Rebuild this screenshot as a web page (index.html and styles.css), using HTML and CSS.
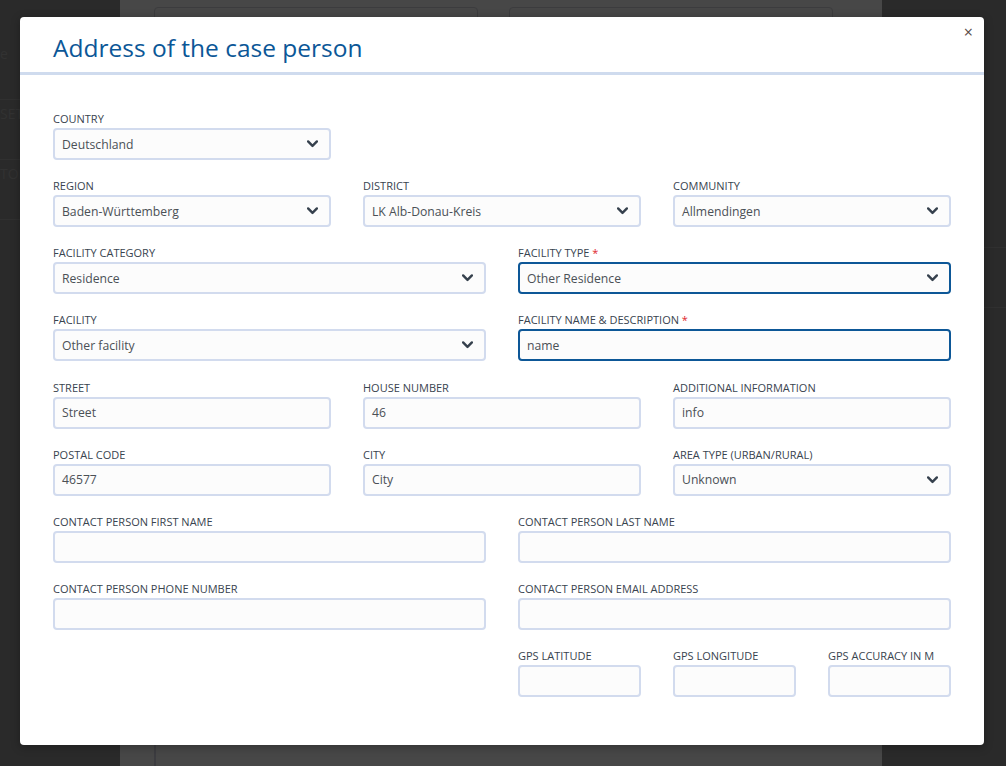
FILE: index.html
```html
<!DOCTYPE html>
<html lang="en">
  <head>
    <meta charset="UTF-8">
    <title>Address of the case person</title>
    <link rel="stylesheet" href="styles.css">
  </head>
  <body>

    <!-- dimmed application behind the window -->
    <div class="backdrop">
      <div class="app-side left">
        <div class="ghost-line">e</div>
        <div class="ghost-line">SET</div>
        <div class="ghost-line">TOK</div>
      </div>
      <div class="app-main">
        <div class="ghost-row">
          <div class="ghost-box"></div>
          <div class="ghost-box"></div>
        </div>
        <div class="ghost-foot"></div>
      </div>
      <div class="app-side right">
        <div class="ghost-line">TYPE</div>
        <div class="ghost-line">Fac</div>
      </div>
    </div>

    <div class="modal" role="dialog">
      <div class="modal-header">
        <h1>Address of the case person</h1>
        <span class="close">&times;</span>
      </div>

      <div class="modal-body">
        <div class="form">

          <div class="field c2">
            <label>Country</label>
            <div class="control">Deutschland <svg class="chev" viewBox="0 0 10 7"><polyline points="1,1.2 5,5.2 9,1.2"/></svg></div>
          </div>

          <div class="field c2 first">
            <label>Region</label>
            <div class="control">Baden-Württemberg <svg class="chev" viewBox="0 0 10 7"><polyline points="1,1.2 5,5.2 9,1.2"/></svg></div>
          </div>
          <div class="field c2">
            <label>District</label>
            <div class="control">LK Alb-Donau-Kreis <svg class="chev" viewBox="0 0 10 7"><polyline points="1,1.2 5,5.2 9,1.2"/></svg></div>
          </div>
          <div class="field c2">
            <label>Community</label>
            <div class="control">Allmendingen <svg class="chev" viewBox="0 0 10 7"><polyline points="1,1.2 5,5.2 9,1.2"/></svg></div>
          </div>

          <div class="field c3">
            <label>Facility category</label>
            <div class="control">Residence <svg class="chev" viewBox="0 0 10 7"><polyline points="1,1.2 5,5.2 9,1.2"/></svg></div>
          </div>
          <div class="field c3">
            <label>Facility type <span class="req">*</span></label>
            <div class="control focus">Other Residence <svg class="chev" viewBox="0 0 10 7"><polyline points="1,1.2 5,5.2 9,1.2"/></svg></div>
          </div>

          <div class="field c3">
            <label>Facility</label>
            <div class="control">Other facility <svg class="chev" viewBox="0 0 10 7"><polyline points="1,1.2 5,5.2 9,1.2"/></svg></div>
          </div>
          <div class="field c3">
            <label>Facility name &amp; description <span class="req">*</span></label>
            <div class="control focus">name</div>
          </div>

          <div class="field c2">
            <label>Street</label>
            <div class="control">Street</div>
          </div>
          <div class="field c2">
            <label>House number</label>
            <div class="control">46</div>
          </div>
          <div class="field c2">
            <label>Additional information</label>
            <div class="control">info</div>
          </div>

          <div class="field c2">
            <label>Postal code</label>
            <div class="control">46577</div>
          </div>
          <div class="field c2">
            <label>City</label>
            <div class="control">City</div>
          </div>
          <div class="field c2">
            <label>Area type (urban/rural)</label>
            <div class="control">Unknown <svg class="chev" viewBox="0 0 10 7"><polyline points="1,1.2 5,5.2 9,1.2"/></svg></div>
          </div>

          <div class="field c3">
            <label>Contact person first name</label>
            <div class="control"></div>
          </div>
          <div class="field c3">
            <label>Contact person last name</label>
            <div class="control"></div>
          </div>

          <div class="field c3">
            <label>Contact person phone number</label>
            <div class="control"></div>
          </div>
          <div class="field c3">
            <label>Contact person email address</label>
            <div class="control"></div>
          </div>

          <div class="field c1 at4">
            <label>GPS latitude</label>
            <div class="control"></div>
          </div>
          <div class="field c1">
            <label>GPS longitude</label>
            <div class="control"></div>
          </div>
          <div class="field c1">
            <label>GPS accuracy in m</label>
            <div class="control"></div>
          </div>

        </div>
      </div>
    </div>

  </body>
</html>
```

FILE: styles.css
```css
/* Page */
html {
  box-sizing: border-box;
}

*,
*::before,
*::after {
  box-sizing: inherit;
}

body {
  margin: 0;
  width: 1006px;
  height: 766px;
  overflow: hidden;
  font-family: "Open Sans", "Noto Sans", Arial, sans-serif;
  background-color: #2a2a2a;
  position: relative;
}

/* Backdrop (the app behind the overlay) */
.backdrop {
  display: flex;
  height: 766px;
}

.app-side {
  padding-top: 40px;
  color: #323232;
  font-size: 14px;
}

.app-side.left {
  width: 120px;
}

.app-side.right {
  flex: 1;
  padding-top: 188px;
}

.ghost-line {
  height: 60px;
  border-bottom: 1px solid #303030;
  padding-top: 4px;
}

.app-main {
  width: 762px;
  background-color: #474747;
  padding: 7px 49px 0 34px;
  display: flex;
  flex-direction: column;
  justify-content: space-between;
}

.ghost-row {
  display: flex;
  gap: 31px;
}

.ghost-box {
  flex: 1;
  height: 40px;
  border: 1px solid #3c3c3e;
  border-radius: 4px;
}

.ghost-foot {
  height: 21px;
  border-left: 2px solid #3c3c40;
}

/* Modal window */
.modal {
  position: absolute;
  left: 20px;
  top: 17px;
  width: 964px;
  background-color: #ffffff;
  border-radius: 4px;
  box-shadow: 0 2px 10px rgba(0, 0, 0, 0.3);
}

.modal-header {
  position: relative;
  padding: 15px 33px 9px;
  border-bottom: 3px solid #cfdbee;
}

.modal-header h1 {
  margin: 0;
  font-size: 24.5px;
  line-height: 31px;
  font-weight: 400;
  color: #0b5797;
}

.close {
  position: absolute;
  top: 4px;
  right: 11px;
  font-size: 16px;
  color: #574846;
}

.modal-body {
  padding: 36px 33px 48px;
}

/* Form grid: 6 columns of 123px */
.form {
  display: grid;
  grid-template-columns: repeat(6, minmax(0, 1fr));
  column-gap: 32px;
  row-gap: 18.15px;
}

.c1 { grid-column: span 1; }
.c2 { grid-column: span 2; }
.c3 { grid-column: span 3; }
.first { grid-column: 1 / span 2; }
.at4 { grid-column: 4 / span 1; }

.field label {
  display: block;
  font-size: 11px;
  line-height: 16px;
  margin-bottom: 1px;
  text-transform: uppercase;
  color: #39444f;
  white-space: nowrap;
}

.req {
  color: #e0262c;
}

.control {
  display: flex;
  align-items: center;
  justify-content: space-between;
  height: 32px;
  padding: 0 11px 0 7px;
  font-size: 12.2px;
  color: #4b5056;
  background-color: #fcfcfc;
  border: 2px solid #d2dbee;
  border-radius: 4px;
}

.control.focus {
  border-color: #0d5797;
}

.chev {
  width: 11px;
  height: 8px;
  fill: none;
  stroke: #36414d;
  stroke-width: 2.2;
  stroke-linecap: round;
  stroke-linejoin: round;
}
```
